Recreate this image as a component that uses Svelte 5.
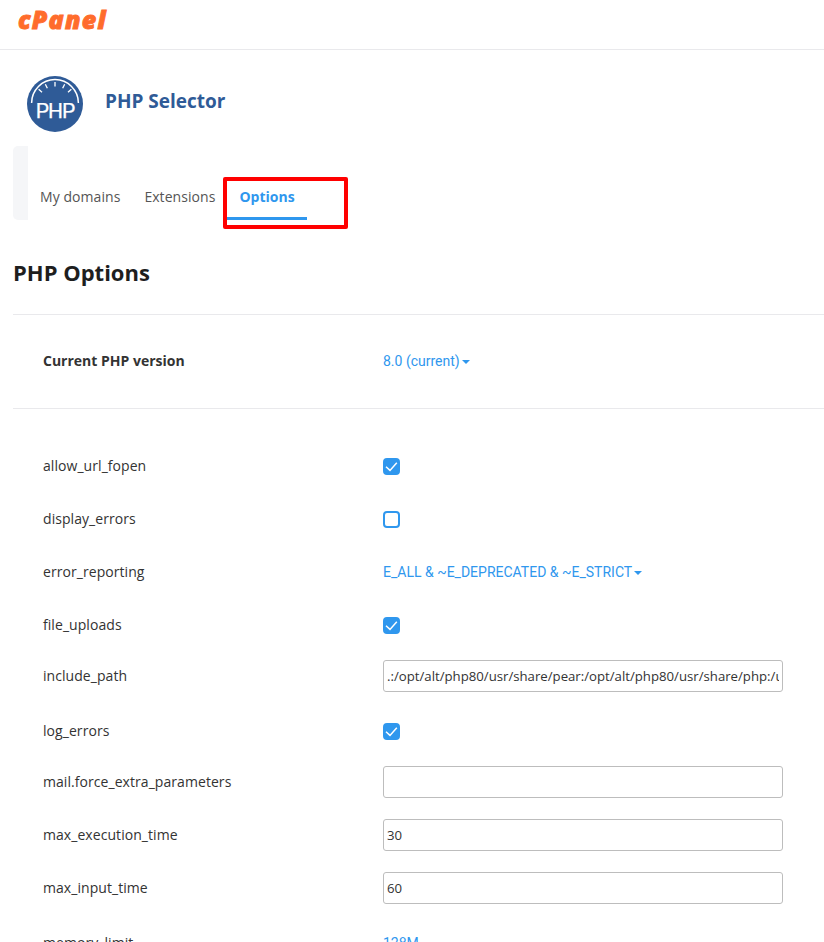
<script lang="ts">
	type Row = { name: string; kind: 'check' | 'link' | 'input'; value?: string; checked?: boolean; caret?: boolean };

	const rows: Row[] = [
		{ name: 'allow_url_fopen', kind: 'check', checked: true },
		{ name: 'display_errors', kind: 'check', checked: false },
		{ name: 'error_reporting', kind: 'link', value: 'E_ALL & ~E_DEPRECATED & ~E_STRICT', caret: true },
		{ name: 'file_uploads', kind: 'check', checked: true },
		{ name: 'include_path', kind: 'input', value: '.:/opt/alt/php80/usr/share/pear:/opt/alt/php80/usr/share/php:/usr/share/pear' },
		{ name: 'log_errors', kind: 'check', checked: true },
		{ name: 'mail.force_extra_parameters', kind: 'input', value: '' },
		{ name: 'max_execution_time', kind: 'input', value: '30' },
		{ name: 'max_input_time', kind: 'input', value: '60' },
		{ name: 'memory_limit', kind: 'link', value: '128M', caret: true }
	];
	const ticks = [-48, -26, 0, 26, 48];
</script>

<div class="page">
	<header class="topbar">
		<span class="logo">cPanel</span>
	</header>

	<div class="app-head">
		<svg class="php-icon" viewBox="0 0 56 56" aria-hidden="true">
			<circle cx="28" cy="28" r="28" fill="#2f5b97" />
			<path d="M4.6 27 A23.4 23.4 0 0 1 51.4 27" fill="none" stroke="#fff" stroke-width="1.5" />
			{#each ticks as t}
				<line x1="28" y1="6" x2="28" y2="10.5" stroke="#fff" stroke-width="1.3" transform="rotate({t} 28 28)" />
			{/each}
			<text x="28" y="42" text-anchor="middle" class="php-text">PHP</text>
		</svg>
		<h1>PHP Selector</h1>
	</div>

	<nav class="tabbar">
		<div class="tab-stub"></div>
		<div class="tabs">
			<span class="tab">My domains</span>
			<span class="tab">Extensions</span>
			<span class="tab active">Options</span>
		</div>
		<div class="highlight"></div>
	</nav>

	<h2>PHP Options</h2>

	<div class="version-row">
		<span class="label strong">Current PHP version</span>
		<span class="link">8.0 (current)<i class="caret"></i></span>
	</div>

	<div class="options">
		{#each rows as row}
			<div class="row" class:row-input={row.kind === 'input'}>
				<span class="label">{row.name}</span>
				{#if row.kind === 'check'}
					<span class="check" class:on={row.checked}>
						{#if row.checked}
							<svg viewBox="0 0 17 17" aria-hidden="true">
								<path d="M3 8.8 L7 12.4 L13.8 4.8" fill="none" stroke="#fff" stroke-width="1.5" />
							</svg>
						{/if}
					</span>
				{:else if row.kind === 'link'}
					<span class="link">{row.value}<i class="caret"></i></span>
				{:else}
					<input class="field" type="text" value={row.value} readonly />
				{/if}
			</div>
		{/each}
	</div>
</div>

<style>
	:global(html),
	:global(body) {
		margin: 0;
		overflow: hidden;
		background: #fff;
	}
	.page {
		width: 824px;
		height: 942px;
		overflow: hidden;
		font-family: 'Open Sans', sans-serif;
		font-size: 14px;
		letter-spacing: 0.06px;
		color: #333;
	}
	.topbar {
		height: 49px;
		border-bottom: 1px solid #e9e9ec;
		padding-left: 18px;
	}
	.logo {
		display: block;
		padding-top: 3px;
		font-weight: 800;
		font-style: italic;
		font-size: 25px;
		line-height: 32px;
		letter-spacing: 1.2px;
		color: #ff6c2c;
		-webkit-text-stroke: 0.9px #ff6c2c;
	}
	.app-head {
		display: flex;
		align-items: center;
		gap: 22px;
		padding: 26px 0 0 27px;
	}
	.php-icon {
		width: 56px;
		height: 56px;
		flex-shrink: 0;
	}
	.php-text {
		font-family: Roboto, sans-serif;
		font-size: 21px;
		letter-spacing: -1px;
		fill: #fff;
		stroke: #fff;
		stroke-width: 0.25px;
	}
	h1 {
		margin: 0 0 6px;
		font-size: 19px;
		font-weight: 700;
		line-height: 28px;
		letter-spacing: 0;
		color: #2f5b97;
	}
	.tabbar {
		position: relative;
		display: flex;
		margin: 14px 0 0 13px;
		height: 74px;
	}
	.tab-stub {
		width: 15px;
		height: 74px;
		background: #f5f6f8;
		border-radius: 5px 0 0 5px;
	}
	.tabs {
		display: flex;
		align-items: flex-start;
		padding-top: 41px;
	}
	.tab {
		display: block;
		height: 33px;
		box-sizing: border-box;
		padding: 0 12px;
		line-height: 20px;
		color: #555;
	}
	.tab.active {
		width: 80px;
		font-weight: 700;
		letter-spacing: 0;
		color: #2f97ee;
		border-bottom: 3px solid #2f97ee;
	}
	.highlight {
		position: absolute;
		left: 210px;
		top: 31px;
		width: 125px;
		height: 52px;
		box-sizing: border-box;
		border: 4px solid #f00;
		border-radius: 2px;
	}
	h2 {
		margin: 36px 0 0 13px;
		font-size: 22px;
		line-height: 32px;
		font-weight: 700;
		letter-spacing: 0;
		color: #1e1e1e;
	}
	.version-row {
		display: grid;
		grid-template-columns: 340px 1fr;
		align-items: center;
		height: 93px;
		margin: 26px 0 0 13px;
		padding-left: 30px;
		border-top: 1px solid #e9e9ec;
		border-bottom: 1px solid #e9e9ec;
	}
	.label {
		color: #333;
		line-height: 20px;
		margin-bottom: 2px;
	}
	.label.strong {
		font-weight: 700;
		letter-spacing: 0;
	}
	.link {
		font-family: Roboto, sans-serif;
		letter-spacing: 0;
		color: #2f97ee;
		line-height: 20px;
		margin-bottom: 2px;
	}
	.caret {
		display: inline-block;
		margin-left: 2px;
		vertical-align: 2px;
		border-top: 4px solid #2f97ee;
		border-left: 4px solid transparent;
		border-right: 4px solid transparent;
	}
	.options {
		margin-left: 43px;
		padding-top: 31px;
	}
	.row {
		display: grid;
		grid-template-columns: 340px 400px;
		align-items: center;
		height: 53px;
		box-sizing: border-box;
	}
	.row-input {
		padding-bottom: 4px;
	}
	.check {
		display: block;
		width: 17px;
		height: 17px;
		box-sizing: border-box;
		border: 2px solid #2f97ee;
		border-radius: 4px;
		position: relative;
		background: #fff;
	}
	.check.on {
		background: #2f97ee;
	}
	.check svg {
		position: absolute;
		left: -2px;
		top: -2px;
		width: 17px;
		height: 17px;
	}
	.field {
		width: 400px;
		height: 32px;
		box-sizing: border-box;
		margin-bottom: 2px;
		padding: 0 3px;
		border: 1px solid #bdbdbd;
		border-radius: 3px;
		font-family: 'Open Sans', sans-serif;
		font-size: 13.2px;
		letter-spacing: 0;
		color: #333;
		outline: none;
		background: #fff;
	}
</style>
